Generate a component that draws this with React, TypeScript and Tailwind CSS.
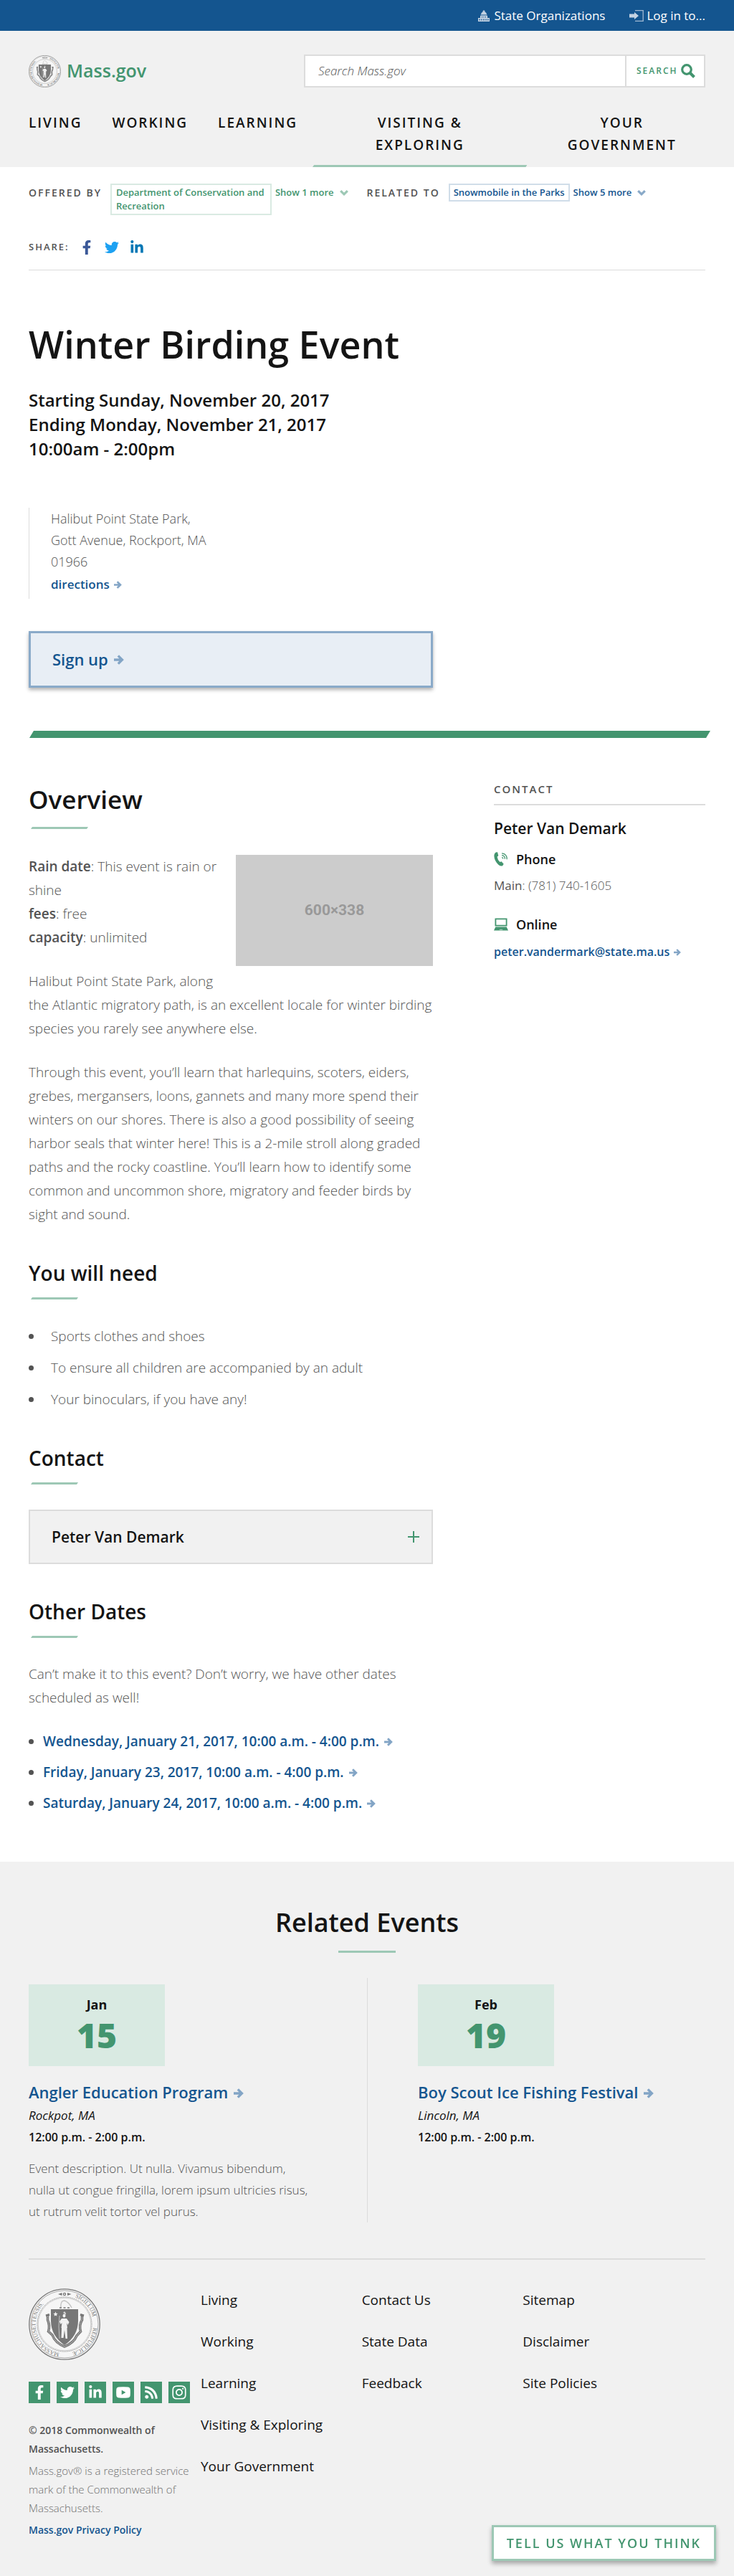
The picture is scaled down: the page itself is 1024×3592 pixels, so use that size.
import React from "react";
import { FaFacebookF, FaInstagram, FaLinkedinIn, FaRss, FaTwitter } from "react-icons/fa";

function Seal({ id, className }: { id: string; className: string }) {
  const dark = "#777777";
  return (
    <svg viewBox="0 0 100 100" className={className} role="img" aria-label="Massachusetts State Seal">
      <defs>
        <path id={id} d="M50 9.5 A40.5 40.5 0 0 1 50 90.5 A40.5 40.5 0 0 1 50 9.5" />
      </defs>
      <circle cx="50" cy="50" r="49.2" fill="#f6f6f6" stroke={dark} strokeWidth="1.3" />
      <circle cx="50" cy="50" r="47" fill="none" stroke={dark} strokeWidth="0.6" />
      <circle cx="50" cy="50" r="38" fill="none" stroke="#8c8c8c" strokeWidth="1" strokeDasharray="1 0.7" />
      <circle cx="50" cy="50" r="36.8" fill="none" stroke="#a5a5a5" strokeWidth="0.5" />
      <g fill={dark} fontFamily="Liberation Serif, serif" fontSize="8">
        <text><textPath href={`#${id}`} startOffset="15">SIGILLUM</textPath></text>
        <text><textPath href={`#${id}`} startOffset="68">REIPUBLICÆ</textPath></text>
        <text><textPath href={`#${id}`} startOffset="134">MASSACHUSETTENSIS.</textPath></text>
      </g>
      <g fill={dark}>
        <circle cx="50" cy="8" r="2.2" />
        <circle cx="50" cy="8" r="0.9" fill="#f6f6f6" />
        <path d="M41 8 L46.5 6 V10 Z M59.500 8 L54 6 V10 Z" />
      </g>
      <path d="M45 27 Q44 17 50 17 Q56 19 60 27" fill="none" stroke="#c4c4c4" strokeWidth="1.4" />
      <path d="M43 27 h3 M48.500 27 h3 M54 27 h3" stroke={dark} strokeWidth="1.4" />
      <path
        d="M26.500 37 V44 Q30 52 27.500 60 L33 65 Q37 76 50 81 Q63 76 67 66 L72.500 60 Q70 51 74.500 44 V37"
        fill="none"
        stroke={dark}
        strokeWidth="3.6"
      />
      <path
        d="M26.500 39 V44 Q30 52 27.500 60 L33 65 Q37 76 50 81 Q63 76 67 66 L72.500 60 Q70 51 74.500 44 V39"
        fill="none"
        stroke="#c9c9c9"
        strokeWidth="1.4"
        strokeDasharray="1 1.2"
      />
      <path d="M24 38 l5 -1.500 M72 36.500 l5 1.500" stroke={dark} strokeWidth="3" />
      <path d="M31 29 H69 V45 Q69 66 50 79 Q31 66 31 45 Z" fill={dark} />
      <path d="M37.500 32.500 l0.900 2.200 2.300 0.200 -1.800 1.500 0.600 2.300 -2 -1.200 -2 1.200 0.600 -2.300 -1.800 -1.500 2.300 -0.200 Z" fill="#f6f6f6" />
      <g fill="#f1f1f1">
        <ellipse cx="49.500" cy="38" rx="2" ry="2.600" />
        <path d="M48 34 l2 -2 2 2.500 v2 Z" fill="#d5d5d5" />
        <path d="M46 42 L53 42 56.500 47 54.500 51 53 48 54 55 H45.500 L46.500 48 44.500 50 43 46 Z" />
        <path d="M46 54.500 H53.500 L54 70 H51.500 L50 58 48.500 69 H45.500 Z" />
      </g>
      <path d="M43 38 Q41 52 43 70" fill="none" stroke="#d5d5d5" strokeWidth="0.8" />
    </svg>
  );
}

function Arrow({ className }: { className: string }) {
  return (
    <svg viewBox="0 0 12 12" className={`ml-0.5 inline-block align-baseline ${className}`} fill="none" stroke="#83a5c6" strokeWidth="2.900" aria-hidden="true">
      <path d="M0 6 H9.500 M5 1.200 L9.800 6 L5 10.800" />
    </svg>
  );
}

function Chevron({ color }: { color: string }) {
  return (
    <svg viewBox="0 0 12 8" className="h-2 w-3" fill="none" stroke={color} strokeWidth="3.200" aria-hidden="true">
      <path d="M1.200 1.200 L6 5.800 L10.800 1.200" />
    </svg>
  );
}

function Capitol() {
  return (
    <svg viewBox="0 0 16 16" className="size-4" fill="#c4d3e3" aria-hidden="true">
      <path d="M7.500 0 h1 v1.200 h1 v1.300 Q12 3.500 12 6 H4 Q4 3.500 6.500 2.500 V1.200 h1 Z M3.500 6.500 h9 v1 h-9 Z M3 8 H13 V11 H16 V16 H0 V11 H3 Z" />
      <path
        d="M5 9 h1 v1.500 h-1 Z M7.500 9 h1 v1.500 h-1 Z M10 9 h1 v1.500 h-1 Z M1.500 12.500 h1.300 v2 h-1.300 Z M4.300 12.500 h1.300 v2 h-1.300 Z M7.300 12.500 h1.400 v2 h-1.400 Z M10.400 12.500 h1.300 v2 h-1.300 Z M13.200 12.500 h1.300 v2 h-1.300 Z"
        fill="#14558f"
      />
    </svg>
  );
}

function LoginIcon() {
  return (
    <svg viewBox="0 0 20 16" className="h-4 w-5" aria-hidden="true">
      <path d="M8 0.700 H19.200 V15.300 H8" fill="none" stroke="#9fb9d3" strokeWidth="1.300" />
      <path d="M0 5.500 H7 V3 L13 8 L7 13 V10.500 H0 Z" fill="#c4d3e3" />
    </svg>
  );
}

function YoutubeIcon() {
  return (
    <svg viewBox="0 0 20 16" className="h-4 w-5" aria-hidden="true">
      <path d="M4 0.500 Q10 0 16 0.500 Q19.500 0.800 19.700 4 Q20 8 19.700 12 Q19.500 15.200 16 15.500 Q10 16 4 15.500 Q0.500 15.200 0.300 12 Q0 8 0.300 4 Q0.500 0.800 4 0.500 Z" fill="#ffffff" />
      <path d="M7.700 4.800 L13.400 8 L7.700 11.200 Z" fill="#43956f" />
    </svg>
  );
}

function PhoneIcon() {
  return (
    <svg viewBox="0 0 19 19" className="size-5" aria-hidden="true">
      <path d="M2.500 0.500 L4.800 0.300 L6 5 L4.300 6.300 Q5 10.500 8 13.300 L10 12.500 L13 16 L11.500 18.300 Q9 19.300 6 16.800 Q0.500 11.500 0.300 5 Q0.300 2 2.500 0.500 Z" fill="#43956f" />
      <g fill="none" stroke="#43956f" strokeWidth="1.200">
        <path d="M10.500 1.800 Q17.500 2.500 17.300 9.800" />
        <path d="M10.500 4.500 Q14.800 5 14.600 9.300" />
        <path d="M10.500 7.200 Q12.200 7.300 12 9" />
      </g>
    </svg>
  );
}

function LaptopIcon() {
  return (
    <svg viewBox="0 0 20 18" className="w-5" aria-hidden="true">
      <path d="M1.500 0.500 H18.500 V11.500 H1.500 Z M3.300 2.300 V9.800 H16.700 V2.300 Z" fill="#43956f" fillRule="evenodd" />
      <path d="M2.300 12.500 H17.700 L20 17.500 H0 Z" fill="#43956f" />
      <path d="M8 15.800 H12 L12.300 17 H7.700 Z" fill="#9dc8b5" />
    </svg>
  );
}

function Rule({ className }: { className: string }) {
  return (
    <div
      aria-hidden="true"
      className={`h-[3px] bg-[#9dc8b5] [clip-path:polygon(2px_0,100%_0,calc(100%-2px)_100%,0_100%)] ${className}`}
    />
  );
}

const navItem = "flex justify-center border-b-[3px] border-transparent pb-3";
const subHeading = "text-[28px] leading-[38px] font-semibold";
const relationLabel = "py-[3px] pr-3 text-sm leading-[19px] tracking-[2px] whitespace-nowrap text-[#535353]";

const otherDates = [
  "Wednesday, January 21, 2017, 10:00 a.m. - 4:00 p.m.",
  "Friday, January 23, 2017, 10:00 a.m. - 4:00 p.m.",
  "Saturday, January 24, 2017, 10:00 a.m. - 4:00 p.m.",
];

const needs = ["Sports clothes and shoes", "To ensure all children are accompanied by an adult", "Your binoculars, if you have any!"];

const footerColumns = [
  ["Living", "Working", "Learning", "Visiting & Exploring", "Your Government"],
  ["Contact Us", "State Data", "Feedback"],
  ["Sitemap", "Disclaimer", "Site Policies"],
];

const social = [
  { label: "Facebook", icon: <FaFacebookF className="size-5" /> },
  { label: "Twitter", icon: <FaTwitter className="size-5" /> },
  { label: "LinkedIn", icon: <FaLinkedinIn className="size-5" /> },
  { label: "YouTube", icon: <YoutubeIcon /> },
  { label: "RSS", icon: <FaRss className="size-5" /> },
  { label: "Instagram", icon: <FaInstagram className="size-[22px]" /> },
];

function EventCard({ month, day, title, place, text }: { month: string; day: string; title: string; place: string; text?: string }) {
  return (
    <article className="max-w-[396px] pt-[9px]">
      <div className="h-[114px] w-[190px] bg-[#d9eae2] pt-[15px] text-center">
        <div className="text-lg leading-[26px] font-bold">{month}</div>
        <div className="text-[48px] leading-[60px] font-extrabold text-[#43956f]">{day}</div>
      </div>
      <h3 className="mt-[21px] text-[22px] leading-[30px] font-semibold whitespace-nowrap text-[#14558f]">
        <a href="#">
          {title} <Arrow className="size-3.5" />
        </a>
      </h3>
      <p className="mt-[3px] text-[17px] leading-[30px] italic">{place}</p>
      <p className="text-base leading-[30px] font-semibold">12:00 p.m. - 2:00 p.m.</p>
      {text && <p className="mt-3.5 text-[17px] leading-[30px] font-light text-[#535353]">{text}</p>}
    </article>
  );
}

export default function App() {
  return (
    <div className="bg-white font-['Open_Sans',sans-serif] text-[#141414]">
      <div className="flex h-[43px] items-center justify-end gap-[34px] bg-[#14558f] px-10 text-[17px] text-white">
        <a href="#" className="flex items-center gap-1.5">
          <Capitol />
          State Organizations
        </a>
        <button type="button" className="flex items-center gap-1">
          <LoginIcon />
          Log in to...
        </button>
      </div>

      <header className="bg-[#f1f1f1] px-10 pt-[33px]">
        <div className="flex items-center justify-between">
          <a href="#" className="flex items-center gap-2 text-[25px] font-semibold text-[#43956f]">
            <Seal id="seal-header" className="size-[45px]" />
            Mass.gov
          </a>
          <form className="flex h-[46px] w-[560px] border-2 border-[#dcdcdc] bg-white" onSubmit={(e) => e.preventDefault()}>
            <input
              type="search"
              aria-label="Search Mass.gov"
              placeholder="Search Mass.gov"
              className="min-w-0 flex-1 px-[18px] text-[17px] font-light italic outline-none placeholder:text-[#535353]"
            />
            <button type="submit" className="flex w-[110px] items-center gap-1 border-l-2 border-[#dcdcdc] pl-3.5 text-xs font-semibold tracking-[2px] text-[#43956f]">
              SEARCH
              <svg viewBox="0 0 20 20" className="size-5" fill="none" stroke="#43956f" aria-hidden="true">
                <circle cx="8" cy="8" r="6.300" strokeWidth="3.200" />
                <path d="M12.500 12.500 L18.500 18.500" strokeWidth="4" />
              </svg>
            </button>
          </form>
        </div>
        <nav className="mt-[34px] flex text-center text-[19px] leading-[31px] font-semibold tracking-[2px] uppercase">
          <a href="#" className={`${navItem} pr-[21px]`}>Living</a>
          <a href="#" className={`${navItem} px-[21px]`}>Working</a>
          <a href="#" className={`${navItem} px-[21px]`}>Learning</a>
          <div className="flex grow-[296] basis-0 flex-col">
            <a href="#" className="mx-auto w-36 grow pb-3">Visiting &amp; Exploring</a>
            <div className="h-[3px] bg-[#9dc8b5] [clip-path:polygon(2px_0,100%_0,calc(100%-2px)_100%,0_100%)]" />
          </div>
          <a href="#" className={`${navItem} ml-4 grow-[230] basis-0`}>
            <span className="w-44">Your Government</span>
          </a>
        </nav>
      </header>

      <main className="px-10">
        <div className="flex items-start pt-[23px] text-[13px] leading-[19px] font-semibold">
          <span className={relationLabel}>OFFERED BY</span>
          <a href="#" className="w-[225px] border-2 border-[#d9eae2] px-1.5 py-px text-[#43956f]">Department of Conservation and Recreation</a>
          <button type="button" className="ml-[5px] flex items-center gap-2 py-[3px] whitespace-nowrap text-[#43956f]">
            Show 1 more <Chevron color="#9dc8b5" />
          </button>
          <span className={`ml-[26px] ${relationLabel}`}>RELATED TO</span>
          <a href="#" className="border-2 border-[#d0dde9] px-[5px] py-px whitespace-nowrap text-[#14558f]">Snowmobile in the Parks</a>
          <button type="button" className="ml-[5px] flex items-center gap-2 py-[3px] whitespace-nowrap text-[#14558f]">
            Show 5 more <Chevron color="#89a9c8" />
          </button>
        </div>

        <div className="mt-[35px] flex h-5 items-center">
          <span className="w-[71px] text-[13px] font-semibold tracking-[2px] text-[#535353]">SHARE:</span>
          <a href="#" aria-label="Share on Facebook" className="w-[35px] text-[#3b5998]"><FaFacebookF className="size-5" /></a>
          <a href="#" aria-label="Share on Twitter" className="w-[35px] text-[#1da1f2]"><FaTwitter className="size-5" /></a>
          <a href="#" aria-label="Share on LinkedIn" className="text-[#0077b5]"><FaLinkedinIn className="size-5" /></a>
        </div>
        <hr className="mt-[21px] border-[#dcdcdc]" />

        <h1 className="mt-[71px] text-[52px] leading-[64px] font-semibold">Winter Birding Event</h1>
        <p className="mt-[29px] text-2xl leading-[34px] font-semibold">
          Starting Sunday, November 20, 2017
          <br />
          Ending Monday, November 21, 2017
          <br />
          10:00am - 2:00pm
        </p>
        <address className="mt-[65px] border-l border-[#dcdcdc] pb-[5px] pl-[30px] text-lg leading-[30px] font-light text-[#535353] not-italic">
          Halibut Point State Park,
          <br />
          Gott Avenue, Rockport, MA
          <br />
          01966
          <br />
          <a href="#" className="mt-0.5 block text-[17px] leading-[30px] font-semibold text-[#14558f]">
            directions <Arrow className="size-[11px]" />
          </a>
        </address>
        <a
          href="#"
          className="mt-[45px] flex h-[79px] w-[564px] items-center gap-1.5 border-3 border-[#8aaac9] bg-[#e8eef5] pl-[30px] text-[22px] font-semibold text-[#14558f] shadow-[0_3px_5px_rgba(0,0,0,0.3)]"
        >
          Sign up <Arrow className="size-3.5" />
        </a>
        <div aria-hidden="true" className="mt-[60px] -mr-[7px] ml-px h-2.5 bg-[#43956f] [clip-path:polygon(6px_0,100%_0,calc(100%-6px)_100%,0_100%)]" />

        <div className="flex justify-between gap-10 pb-[60px]">
          <div className="w-[564px] pt-16 text-[19px] leading-[33px] font-light text-[#535353]">
            <section>
              <h2 className="text-[35px] leading-[44px] font-semibold text-[#141414]">Overview</h2>
              <Rule className="mt-4 ml-[3px] w-20" />
              <div className="mt-9">
                <div
                  role="img"
                  aria-label="Placeholder, 600 by 338"
                  className="float-right mb-5 ml-[26px] flex h-[155px] w-[275px] items-center justify-center bg-[#cccccc] font-[Roboto,sans-serif] text-[21px] font-bold text-[#999999]"
                >
                  600×338
                </div>
                <p>
                  <b className="font-semibold">Rain date</b>: This event is rain or
                  <br />
                  shine
                  <br />
                  <b className="font-semibold">fees</b>: free
                  <br />
                  <b className="font-semibold">capacity</b>: unlimited
                </p>
                <p className="mt-7">
                  Halibut Point State Park, along the Atlantic migratory path, is an excellent locale for winter birding species you rarely see anywhere else.
                </p>
                <p className="mt-7">
                  Through this event, you’ll learn that harlequins, scoters, eiders, grebes, mergansers, loons, gannets and many more spend their winters on our shores. There is also a good possibility of seeing harbor seals that winter here! This is a 2-mile stroll along graded paths and the rocky coastline. You’ll learn how to identify some common and uncommon shore, migratory and feeder birds by sight and sound.
                </p>
              </div>
            </section>

            <section className="mt-[46px]">
              <h3 className={`${subHeading} text-[#141414]`}>You will need</h3>
              <Rule className="mt-[15px] ml-[3px] w-[66px]" />
              <ul className="mt-[29px]">
                {needs.map((item) => (
                  <li key={item} className="flex items-center gap-6 leading-[44px]">
                    <span className="size-[7px] rounded-full bg-[#535353]" />
                    {item}
                  </li>
                ))}
              </ul>
            </section>

            <section className="mt-[41px]">
              <h3 className={`${subHeading} text-[#141414]`}>Contact</h3>
              <Rule className="mt-[15px] ml-[3px] w-[66px]" />
              <button type="button" aria-expanded="false" className="mt-[35px] flex h-[76px] w-full items-center justify-between border-2 border-[#dcdcdc] bg-[#f1f1f1] pr-4 pl-[30px] text-[21px] font-semibold text-[#141414]">
                Peter Van Demark
                <svg viewBox="0 0 18 18" className="size-[18px]" stroke="#43956f" strokeWidth="2" aria-hidden="true">
                  <path d="M9 1 V17 M1 9 H17" />
                </svg>
              </button>
            </section>

            <section className="mt-[47px]">
              <h3 className={`${subHeading} text-[#141414]`}>Other Dates</h3>
              <Rule className="mt-[15px] ml-[3px] w-[66px]" />
              <p className="mt-[34px]">Can’t make it to this event? Don’t worry, we have other dates scheduled as well!</p>
              <ul className="mt-[23px] font-semibold">
                {otherDates.map((date) => (
                  <li key={date} className="flex items-center gap-[13px] leading-[43px] text-[#14558f]">
                    <span className="size-[7px] rounded-full bg-[#535353]" />
                    <a href="#">
                      {date} <Arrow className="size-3" />
                    </a>
                  </li>
                ))}
              </ul>
            </section>
          </div>

          <aside className="w-[295px] pt-[61px]">
            <h2 className="border-b-2 border-[#dcdcdc] pb-[11px] text-[15px] leading-5 font-semibold tracking-[2px] text-[#535353]">CONTACT</h2>
            <h3 className="mt-[17px] text-[21px] leading-[30px] font-semibold">Peter Van Demark</h3>
            <h4 className="mt-[15px] flex items-center gap-[11px] text-lg leading-[26px] font-semibold">
              <PhoneIcon />
              Phone
            </h4>
            <p className="mt-[11px] text-[17px] leading-[26px] font-light text-[#535353]">
              <span className="font-normal">Main</span>: (781) 740-1605
            </p>
            <h4 className="mt-7 flex items-center gap-[11px] text-lg leading-[26px] font-semibold">
              <LaptopIcon />
              Online
            </h4>
            <a href="#" className="mt-3 block text-base leading-[26px] font-semibold whitespace-nowrap text-[#14558f]">
              peter.vandermark@state.ma.us <Arrow className="size-2.5" />
            </a>
          </aside>
        </div>
      </main>

      <section className="bg-[#f1f1f1] px-10 pt-[61px] pb-[50px]">
        <h2 className="text-center text-[36px] leading-[48px] font-semibold">Related Events</h2>
        <div aria-hidden="true" className="mx-auto mt-[15px] h-[3px] w-20 bg-[#9dc8b5]" />
        <div className="mt-[35px] grid grid-cols-2">
          <EventCard
            month="Jan"
            day="15"
            title="Angler Education Program"
            place="Rockpot, MA"
            text="Event description. Ut nulla. Vivamus bibendum, nulla ut congue fringilla, lorem ipsum ultricies risus, ut rutrum velit tortor vel purus."
          />
          <div className="border-l border-[#dcdcdc] pb-px pl-[70px]">
            <EventCard month="Feb" day="19" title="Boy Scout Ice Fishing Festival" place="Lincoln, MA" />
          </div>
        </div>
      </section>

      <footer className="bg-[#f1f1f1] px-10 pb-[51px]">
        <div className="flex gap-[15px] border-t-2 border-[#dcdcdc] pt-10">
          <div className="w-[225px] shrink-0 text-[15px] leading-[26px]">
            <Seal id="seal-footer" className="size-[100px]" />
            <ul className="mt-[30px] flex justify-between">
              {social.map(({ label, icon }) => (
                <li key={label}>
                  <a href="#" aria-label={label} className="flex size-[30px] items-center justify-center bg-[#43956f] text-white">
                    {icon}
                  </a>
                </li>
              ))}
            </ul>
            <p className="mt-[25px] text-sm leading-[26px] font-semibold text-[#535353]">© 2018 Commonwealth of Massachusetts.</p>
            <p className="mt-1 font-light text-[#707070]">Mass.gov® is a registered service mark of the Commonwealth of Massachusetts.</p>
            <a href="#" className="mt-[5px] block text-sm leading-[26px] font-semibold text-[#14558f]">Mass.gov Privacy Policy</a>
          </div>
          <nav aria-label="Footer" className="grid flex-1 grid-cols-[1fr_1fr_1fr] pt-0.5 pr-[30px] text-[19px] leading-7">
            {footerColumns.map((links) => (
              <ul key={links[0]} className="flex flex-col gap-[30px]">
                {links.map((link) => (
                  <li key={link}>
                    <a href="#">{link}</a>
                  </li>
                ))}
              </ul>
            ))}
          </nav>
        </div>
      </footer>

      <button
        type="button"
        className="fixed right-[25px] bottom-[21px] h-[50px] border-3 border-[#9dc8b5] bg-white px-[18px] text-lg font-semibold tracking-[2px] whitespace-nowrap text-[#43956f] shadow-[0_4px_6px_rgba(0,0,0,0.3)]"
      >
        TELL US WHAT YOU THINK
      </button>
    </div>
  );
}
